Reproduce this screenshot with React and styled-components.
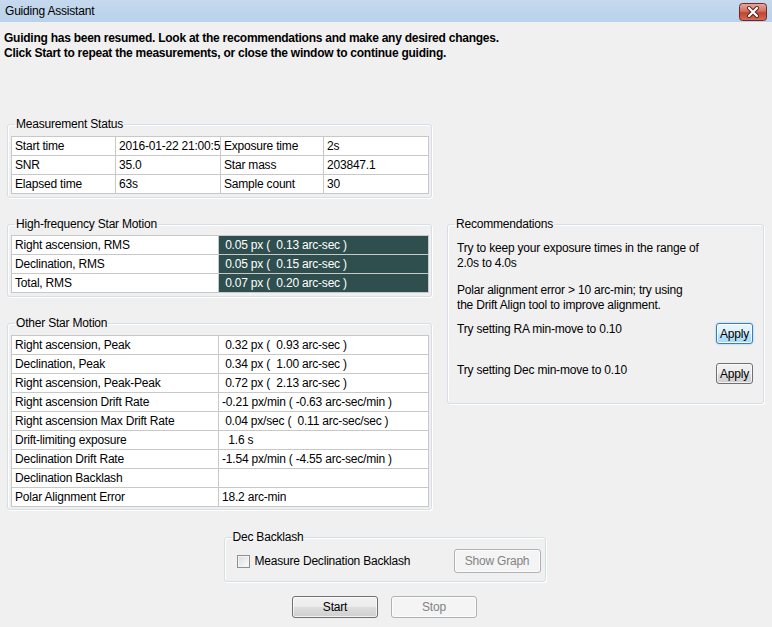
import React from "react";
import styled, { createGlobalStyle, css } from "styled-components";

const GlobalStyle = createGlobalStyle`
  html, body {
    margin: 0;
    padding: 0;
    background: #f0f0f0;
  }
  body {
    font-family: "Liberation Sans", Arial, sans-serif;
    font-size: 12px;
    letter-spacing: -0.2px;
    color: #000;
  }
`;

const Window = styled.div`
  width: 772px;
  height: 627px;
  background: #f0f0f0;
  overflow: hidden;
`;

const TitleBar = styled.div`
  height: 22px;
  display: flex;
  align-items: center;
  justify-content: space-between;
  padding: 0 5px 0 5px;
  background: linear-gradient(#c6d9ee, #b9d1ea);
  box-sizing: border-box;
`;

const TitleText = styled.span`
  font-size: 12px;
  line-height: 14px;
  color: #000;
`;

const CloseBtn = styled.div`
  width: 28px;
  height: 18px;
  display: flex;
  align-items: center;
  justify-content: center;
  margin-top: 1px;
`;

const Body = styled.div`
  padding: 9px 8px 0 4px;
`;

const Intro = styled.div`
  font-weight: bold;
  line-height: 15px;
  letter-spacing: -0.25px;
`;

const Content = styled.div`
  padding-left: 3px;
`;

const Layout = styled.div`
  display: grid;
  grid-template-columns: 425px 317px;
  column-gap: 15px;
  row-gap: 19px;
  margin-top: 56px;
  align-items: start;
`;

const Stack = styled.div`
  display: flex;
  flex-direction: column;
  gap: 19px;
`;

const Group = styled.fieldset`
  margin: 0;
  padding: ${(p) => p.$pt ?? 5}px 3px ${(p) => p.$pb ?? 3}px 3px;
  border: 1px solid #d5dfe5;
  border-radius: 3px;
  box-shadow: inset 1px 1px 0 #fff, 1px 1px 0 #fff;
  min-width: 0;
  box-sizing: border-box;
  ${(p) => p.$width && css`width: ${p.$width}px;`}
`;

const Legend = styled.legend`
  padding: 0 1px;
  margin-left: 4px;
  line-height: 14px;
  color: #000;
`;

const Table = styled.table`
  border-collapse: collapse;
  width: 417px;
  table-layout: fixed;
  background: #fff;
  border: 1px solid #a0a0a0;
`;

const Cell = styled.td`
  height: 18px;
  line-height: 18px;
  padding: 0 3px;
  border: 1px solid #c8c8c8;
  white-space: pre;
  overflow: hidden;
  text-overflow: clip;
  box-sizing: border-box;
  ${(p) =>
    p.$dark &&
    css`
      background: #2f4f4f;
      color: #fff;
    `}
`;

const RecText = styled.p`
  margin: 0;
  line-height: 15px;
`;

const RecBody = styled.div`
  display: flex;
  flex-direction: column;
  padding: 5px 7px 16px 6px;
  gap: 12px;
`;

const RecRows = styled.div`
  margin-top: -3px;
`;

const RecRow = styled.div`
  display: flex;
  justify-content: space-between;
  align-items: flex-start;
  height: ${(p) => p.$h}px;
`;

const Button = styled.button`
  font-family: "Liberation Sans", Arial, sans-serif;
  font-size: 12px;
  letter-spacing: -0.2px;
  width: ${(p) => p.$w}px;
  height: ${(p) => p.$h}px;
  margin-top: ${(p) => p.$mt || 0}px;
  padding: 0;
  border-radius: 3px;
  border: 1px solid #707070;
  color: #000;
  background: linear-gradient(#f2f2f2 0%, #ebebeb 50%, #dddddd 51%, #cfcfcf 100%);
  box-shadow: inset 0 0 0 1px rgba(255, 255, 255, 0.7);
  ${(p) =>
    p.$focus &&
    css`
      border-color: #3c7fb1;
      background: linear-gradient(#eaf6fd 0%, #d9f0fc 50%, #bee6fd 51%, #a7d9f5 100%);
      box-shadow: inset 0 0 0 1px rgba(255, 255, 255, 0.8), 0 0 2px #6fc2f0;
    `}
  &:disabled {
    color: #838383;
    border-color: #adb2b5;
    background: #f4f4f4;
  }
`;

const DecRow = styled.div`
  display: flex;
  align-items: center;
  justify-content: space-between;
  height: 24px;
  padding: 0 1px 5px 9px;
`;

const CheckLabel = styled.label`
  display: flex;
  align-items: center;
  gap: 5px;
`;

const CheckBox = styled.span`
  width: 11px;
  height: 11px;
  border: 1px solid #8e8f8f;
  background: linear-gradient(135deg, #dcdcdc, #fbfbfb);
  box-shadow: inset 0 0 0 1px #f4f4f4;
`;

const Center = styled.div`
  display: flex;
  justify-content: center;
  padding-right: 2px;
  margin-top: ${(p) => p.$mt}px;
  gap: ${(p) => p.$gap || 0}px;
`;

const measurement = [
  ["Start time", "2016-01-22 21:00:58", "Exposure time", "2s"],
  ["SNR", "35.0", "Star mass", "203847.1"],
  ["Elapsed time", "63s", "Sample count", "30"],
];

const highFreq = [
  ["Right ascension, RMS", " 0.05 px (  0.13 arc-sec )"],
  ["Declination, RMS", " 0.05 px (  0.15 arc-sec )"],
  ["Total, RMS", " 0.07 px (  0.20 arc-sec )"],
];

const other = [
  ["Right ascension, Peak", " 0.32 px (  0.93 arc-sec )"],
  ["Declination, Peak", " 0.34 px (  1.00 arc-sec )"],
  ["Right ascension, Peak-Peak", " 0.72 px (  2.13 arc-sec )"],
  ["Right ascension Drift Rate", "-0.21 px/min ( -0.63 arc-sec/min )"],
  ["Right ascension Max Drift Rate", " 0.04 px/sec (  0.11 arc-sec/sec )"],
  ["Drift-limiting exposure", "  1.6 s"],
  ["Declination Drift Rate", "-1.54 px/min ( -4.55 arc-sec/min )"],
  ["Declination Backlash", ""],
  ["Polar Alignment Error", "18.2 arc-min"],
];

const CloseIcon = () => (
  <svg width="28" height="18" viewBox="0 0 28 18">
    <defs>
      <linearGradient id="cg" x1="0" y1="0" x2="0" y2="1">
        <stop offset="0" stopColor="#e9a99c" />
        <stop offset="0.45" stopColor="#d4705e" />
        <stop offset="0.55" stopColor="#c2452f" />
        <stop offset="1" stopColor="#d86d55" />
      </linearGradient>
    </defs>
    <rect x="0.5" y="0.5" width="27" height="17" rx="3" fill="url(#cg)" stroke="#6b2a2a" />
    <path d="M10 5 L18 13 M18 5 L10 13" stroke="#4a2020" strokeWidth="4" strokeLinecap="round" />
    <path d="M10 5 L18 13 M18 5 L10 13" stroke="#fff" strokeWidth="2.2" strokeLinecap="round" />
  </svg>
);

const TwoColTable = ({ rows, dark }) => (
  <Table>
    <colgroup>
      <col style={{ width: 207 }} />
      <col style={{ width: 210 }} />
    </colgroup>
    <tbody>
      {rows.map(([k, v]) => (
        <tr key={k}>
          <Cell>{k}</Cell>
          <Cell $dark={dark}>{v}</Cell>
        </tr>
      ))}
    </tbody>
  </Table>
);

export default function App() {
  return (
    <Window>
      <GlobalStyle />
      <TitleBar>
        <TitleText>Guiding Assistant</TitleText>
        <CloseBtn>
          <CloseIcon />
        </CloseBtn>
      </TitleBar>
      <Body>
        <Intro>
          Guiding has been resumed. Look at the recommendations and make any desired changes.
          <br />
          Click Start to repeat the measurements, or close the window to continue guiding.
        </Intro>
        <Content>
          <Layout>
            <Group $width={425}>
              <Legend>Measurement Status</Legend>
              <Table>
                <colgroup>
                  <col style={{ width: 104 }} />
                  <col style={{ width: 105 }} />
                  <col style={{ width: 103 }} />
                  <col style={{ width: 105 }} />
                </colgroup>
                <tbody>
                  {measurement.map((r) => (
                    <tr key={r[0]}>
                      {r.map((c, i) => (
                        <Cell key={i}>{c}</Cell>
                      ))}
                    </tr>
                  ))}
                </tbody>
              </Table>
            </Group>
            <div />
            <Stack>
              <Group $width={425} $pt={4}>
                <Legend>High-frequency Star Motion</Legend>
                <TwoColTable rows={highFreq} dark />
              </Group>
              <Group $width={425} $pt={5} $pb={2}>
                <Legend>Other Star Motion</Legend>
                <TwoColTable rows={other} />
              </Group>
            </Stack>
            <Group $width={317}>
              <Legend>Recommendations</Legend>
              <RecBody>
                <RecText>
                  Try to keep your exposure times in the range of
                  <br />
                  2.0s to 4.0s
                </RecText>
                <RecText>
                  Polar alignment error &gt; 10 arc-min; try using
                  <br />
                  the Drift Align tool to improve alignment.
                </RecText>
                <RecRows>
                  <RecRow $h={41}>
                    <RecText>Try setting RA min-move to 0.10</RecText>
                    <Button $w={37} $h={21} $mt={1} $focus>
                      Apply
                    </Button>
                  </RecRow>
                  <RecRow $h={21}>
                    <RecText>Try setting Dec min-move to 0.10</RecText>
                    <Button $w={37} $h={21}>
                      Apply
                    </Button>
                  </RecRow>
                </RecRows>
              </RecBody>
            </Group>
          </Layout>
          <Center $mt={20}>
            <Group $width={322}>
              <Legend>Dec Backlash</Legend>
              <DecRow>
                <CheckLabel>
                  <CheckBox />
                  Measure Declination Backlash
                </CheckLabel>
                <Button $w={87} $h={24} disabled>
                  Show Graph
                </Button>
              </DecRow>
            </Group>
          </Center>
          <Center $mt={14} $gap={13}>
            <Button $w={86} $h={22}>
              Start
            </Button>
            <Button $w={86} $h={22} disabled>
              Stop
            </Button>
          </Center>
        </Content>
      </Body>
    </Window>
  );
}
